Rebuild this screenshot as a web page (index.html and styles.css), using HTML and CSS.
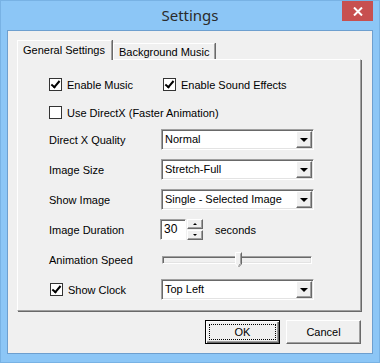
FILE: index.html
```html
<!DOCTYPE html>
<html lang="en">
<head>
    <meta charset="UTF-8">
    <title>Settings</title>
    <link rel="stylesheet" href="styles.css">
</head>
<body>

<div class="window">
    <div class="titlebar">
        <span class="title">Settings</span>
        <span class="close">
            <svg width="10" height="9" viewBox="0 0 10 9"><path d="M1 0.5 L9 8.5 M9 0.5 L1 8.5" stroke="#fff" stroke-width="2"/></svg>
        </span>
    </div>

    <div class="client">
        <div class="tabs">
            <div class="tab active">General Settings</div>
            <div class="tab">Background Music</div>
        </div>

        <div class="panel">
            <div class="checks">
                <div class="check-row">
                    <label class="check"><span class="box on"></span>Enable Music</label>
                    <label class="check"><span class="box on"></span>Enable Sound Effects</label>
                </div>
                <div class="check-row">
                    <label class="check"><span class="box"></span>Use DirectX (Faster Animation)</label>
                </div>
            </div>

            <div class="fields">
                <div class="field">
                    <span class="label">Direct X Quality</span>
                    <div class="combo"><span class="value">Normal</span><span class="drop"></span></div>
                </div>
                <div class="field">
                    <span class="label">Image Size</span>
                    <div class="combo"><span class="value">Stretch-Full</span><span class="drop"></span></div>
                </div>
                <div class="field">
                    <span class="label">Show Image</span>
                    <div class="combo"><span class="value">Single - Selected Image</span><span class="drop"></span></div>
                </div>
                <div class="field">
                    <span class="label">Image Duration</span>
                    <div class="spin-wrap">
                        <span class="spin-input">30</span>
                        <span class="spin-btns">
                            <span class="spin-btn"><i class="tri up"></i></span>
                            <span class="spin-btn"><i class="tri down"></i></span>
                        </span>
                        <span class="unit">seconds</span>
                    </div>
                </div>
                <div class="field">
                    <span class="label">Animation Speed</span>
                    <div class="slider">
                        <div class="track"></div>
                        <svg class="thumb" width="8" height="16" viewBox="0 0 8 16">
                            <path d="M0.5 0.5 H6.5 V12 L3.5 15 L0.5 12 Z" fill="#f0f0f0" stroke="#fff"/>
                            <path d="M6.5 0.5 V12 L3.5 15" fill="none" stroke="#696969"/>
                            <path d="M5.5 1.5 V11.5 L3.5 13.5" fill="none" stroke="#a0a0a0"/>
                        </svg>
                    </div>
                </div>
                <div class="field">
                    <label class="check"><span class="box on"></span>Show Clock</label>
                    <div class="combo"><span class="value">Top Left</span><span class="drop"></span></div>
                </div>
            </div>
        </div>

        <div class="buttons">
            <button class="btn default"><span class="focus">OK</span></button>
            <button class="btn">Cancel</button>
        </div>
    </div>
</div>

</body>
</html>
```

FILE: styles.css
```css
body {
    margin: 0;
    font-family: "Liberation Sans", Tahoma, Arial, sans-serif;
    font-size: 11px;
    color: #000;
}

.window {
    width: 380px;
    height: 363px;
    box-sizing: border-box;
    background-color: #8cc6f6;
    border: 1px solid #78b2e4;
}

.titlebar {
    display: grid;
    grid-template-columns: 1fr auto 1fr;
    height: 29px;
}

.title {
    grid-column: 2;
    font-family: "Noto Sans", "Open Sans", sans-serif;
    font-size: 15px;
    color: #2b2b2b;
    line-height: 29px;
}

.close {
    grid-column: 3;
    justify-self: end;
    align-self: start;
    display: flex;
    align-items: center;
    justify-content: center;
    width: 31px;
    height: 20px;
    margin-right: 6px;
    background-color: #c75050;
}

.client {
    margin: 0 6px 0 6px;
    height: 324px;
    box-sizing: border-box;
    background-color: #f0f0f0;
    border: 1px solid #6d9fcf;
    padding: 9px 10px 0 9px;
}

/* tabs */
.tabs {
    display: flex;
    align-items: flex-end;
    height: 19px;
}

.tab {
    height: 16px;
    line-height: 17px;
    box-sizing: border-box;
    padding: 0 5px;
    border: 1px solid #fff;
    border-bottom: none;
    border-right-color: #a0a0a0;
    box-shadow: 1px 0 0 #696969;
    margin-left: 1px;
}

.tab.active {
    position: relative;
    z-index: 1;
    height: 20px;
    line-height: 19px;
    margin: 0 0 -1px 0;
    padding: 0 6px 0 5px;
    background-color: #f0f0f0;
}

.panel {
    height: 252px;
    box-sizing: border-box;
    border: 1px solid #fff;
    border-right-color: #a0a0a0;
    border-bottom-color: #a0a0a0;
    box-shadow: 1px 1px 0 #696969;
    margin-right: 1px;
    padding: 14px 0 0 31px;
}

/* checkboxes */
.checks {
    display: flex;
    flex-direction: column;
    gap: 7px;
}

.check-row {
    display: grid;
    grid-template-columns: 114px auto;
    height: 21px;
    align-items: center;
}

.check {
    display: flex;
    align-items: center;
    gap: 5px;
    white-space: nowrap;
}

.box {
    flex-shrink: 0;
    width: 13px;
    height: 13px;
    box-sizing: border-box;
    border: 1px solid #333;
    background-color: #fff;
    position: relative;
}

.box.on::after {
    content: "";
    position: absolute;
    left: 3px;
    top: 0px;
    width: 3px;
    height: 7px;
    border: solid #000;
    border-width: 0 2px 2px 0;
    transform: rotate(40deg);
}

/* fields */
.fields {
    display: flex;
    flex-direction: column;
    gap: 9px;
    margin-top: 6px;
}

.field {
    display: grid;
    grid-template-columns: 112px auto;
    height: 21px;
    align-items: center;
}

.field .check {
    padding-left: 1px;
}

.combo {
    display: flex;
    width: 153px;
    height: 21px;
    box-sizing: border-box;
    border: 1px solid;
    border-color: #a0a0a0 #fff #fff #a0a0a0;
    box-shadow: inset 1px 1px 0 #696969, inset -1px -1px 0 #e3e3e3;
    background-color: #fff;
    padding: 1px;
}

.value {
    flex: 1;
    padding-left: 2px;
    line-height: 17px;
}

.drop {
    width: 16px;
    height: 17px;
    box-sizing: border-box;
    background-color: #f0f0f0;
    border: 1px solid;
    border-color: #fff #696969 #696969 #fff;
    box-shadow: inset -1px -1px 0 #a0a0a0;
    display: flex;
    align-items: center;
    justify-content: center;
}

.drop::after {
    content: "";
    border-left: 4px solid transparent;
    border-right: 4px solid transparent;
    border-top: 4px solid #000;
    margin-top: 1px;
}

/* spinner */
.spin-wrap {
    display: flex;
    align-items: center;
    margin-left: -1px;
}

.spin-input {
    width: 26px;
    height: 21px;
    box-sizing: border-box;
    border: 1px solid;
    border-color: #a0a0a0 #fff #fff #a0a0a0;
    box-shadow: inset 1px 1px 0 #696969;
    background-color: #fff;
    padding-left: 3px;
    line-height: 19px;
    font-size: 12px;
}

.spin-btns {
    display: flex;
    flex-direction: column;
    gap: 1px;
    margin-left: 1px;
}

.spin-btn {
    width: 16px;
    height: 10px;
    box-sizing: border-box;
    border: 1px solid;
    border-color: #fff #696969 #696969 #fff;
    box-shadow: inset -1px -1px 0 #a0a0a0;
    background-color: #f0f0f0;
    display: flex;
    align-items: center;
    justify-content: center;
}

.tri {
    border-left: 2px solid transparent;
    border-right: 2px solid transparent;
}

.tri.up {
    border-bottom: 2px solid #000;
}

.tri.down {
    border-top: 2px solid #000;
}

.unit {
    margin-left: 12px;
}

/* slider */
.slider {
    position: relative;
    width: 150px;
    height: 21px;
    margin-left: 1px;
    display: flex;
    align-items: center;
}

.track {
    width: 100%;
    height: 8px;
    box-sizing: border-box;
    border: 1px solid;
    border-color: #a0a0a0 #fff #fff #a0a0a0;
    box-shadow: inset 1px 1px 0 #696969, inset -1px -1px 0 #e3e3e3;
    background-color: #f0f0f0;
}

.thumb {
    position: absolute;
    left: 73px;
    top: 3px;
}

/* dialog buttons */
.buttons {
    display: flex;
    justify-content: flex-end;
    gap: 6px;
    margin-top: 9px;
    margin-right: 1px;
}

.btn {
    width: 75px;
    height: 24px;
    box-sizing: border-box;
    font-family: inherit;
    font-size: 11px;
    background-color: #f0f0f0;
    border: 1px solid;
    border-color: #fff #696969 #696969 #fff;
    box-shadow: inset -1px -1px 0 #a0a0a0;
    padding: 0;
    color: #000;
}

.btn.default {
    border: 1px solid #000;
    box-shadow: inset 1px 1px 0 #fff, inset -1px -1px 0 #696969, inset -2px -2px 0 #a0a0a0;
    padding: 3px;
}

.focus {
    display: block;
    height: 16px;
    line-height: 14px;
    box-sizing: border-box;
    border: 1px dotted #000;
}
```
